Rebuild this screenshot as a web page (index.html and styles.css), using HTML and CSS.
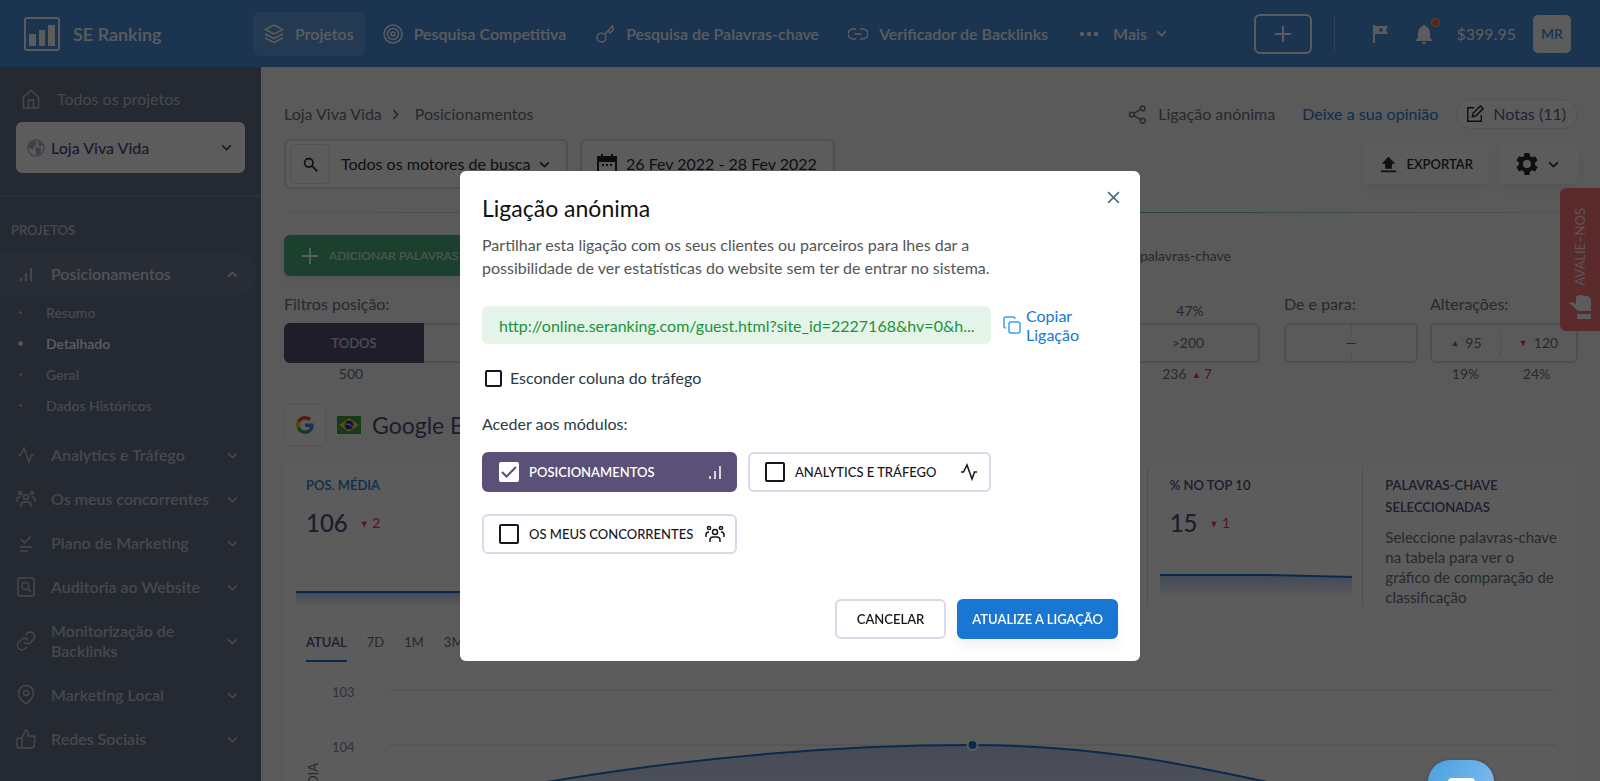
FILE: index.html
```html
<!DOCTYPE html>
<html lang="pt">
<head>
  <meta charset="UTF-8">
  <meta name="viewport" content="width=device-width, initial-scale=1.0">
  <title>SE Ranking - Posicionamentos</title>
  <link rel="stylesheet" href="styles.css">
</head>
<body>

<!-- shared icons -->
<svg class="sprite" aria-hidden="true">
  <symbol id="chevron" viewBox="0 0 12 12"><path d="M2 4l4 4 4-4"/></symbol>
  <symbol id="bars" viewBox="0 0 20 20"><path d="M5 14v3M10 9v8M15 4v13"/></symbol>
  <symbol id="pulse" viewBox="0 0 20 20"><path d="M2 10h2.5L8 3l5 14 2.5-7H18"/></symbol>
  <symbol id="people" viewBox="0 0 20 20">
    <circle cx="10" cy="8" r="2.5"/><circle cx="4" cy="4" r="1.6"/><circle cx="16" cy="4" r="1.6"/>
    <path d="M5 18v-2a3 3 0 0 1 3-3h4a3 3 0 0 1 3 3v2M1 13v-2a3 3 0 0 1 3-3M19 13v-2a3 3 0 0 0-3-3"/>
  </symbol>
</svg>

<header class="topbar">
  <a class="logo" href="#">
    <svg width="36" height="34" viewBox="0 0 36 34"><rect x="1" y="1" width="34" height="32" rx="2" fill="none" stroke="currentColor" stroke-width="2"/><path d="M5 17h7v12H5zM15 13h6v16h-6zM24 8h7v21h-7z" fill="currentColor"/></svg>
    <span>SE Ranking</span>
  </a>
  <nav class="topnav">
    <a class="topnav-link active" href="#">
      <svg class="icon" viewBox="0 0 20 20"><path d="M10 1l9 4.500-9 4.500-9-4.500zM1 10l9 4.500 9-4.500M1 14l9 4.500 9-4.500"/></svg>
      Projetos
    </a>
    <a class="topnav-link" href="#">
      <svg class="icon" viewBox="0 0 20 20"><circle cx="10" cy="10" r="9"/><circle cx="10" cy="10" r="5.500"/><circle cx="10" cy="10" r="2"/></svg>
      Pesquisa Competitiva
    </a>
    <a class="topnav-link" href="#">
      <svg class="icon" viewBox="0 0 20 20"><circle cx="6.500" cy="13.500" r="4.500"/><path d="M10 10l7.500-8 1 3.500-3.500 3.500-2-2"/></svg>
      Pesquisa de Palavras-chave
    </a>
    <a class="topnav-link" href="#">
      <svg class="icon" viewBox="0 0 20 20"><path d="M8 5H5a5 5 0 0 0 0 10h3M12 5h3a5 5 0 0 1 0 10h-3M6.500 10h7"/></svg>
      Verificador de Backlinks
    </a>
    <a class="topnav-link more" href="#">
      <svg class="icon fill" viewBox="0 0 20 20"><circle cx="3" cy="10" r="2.200"/><circle cx="10" cy="10" r="2.200"/><circle cx="17" cy="10" r="2.200"/></svg>
      Mais
      <svg class="icon small" viewBox="0 0 12 12"><use href="#chevron"/></svg>
    </a>
  </nav>
  <div class="account">
    <button class="add-btn" aria-label="+"><svg class="icon" viewBox="0 0 20 20"><path d="M10 2v16M2 10h16"/></svg></button>
    <span class="account-line"></span>
    <svg class="icon flag-icon" viewBox="0 0 20 20"><path d="M3 1h2v1h13l-2 4 2 4H5v9H3z" fill="currentColor"/><circle cx="11" cy="6" r="1.800" class="hole"/></svg>
    <div class="bell">
      <svg class="icon fill" viewBox="0 0 20 20"><path d="M10 1c1 0 1.500.7 1.500 1.500C14.500 3.200 16 5.800 16 9v5l2 2v1H2v-1l2-2V9c0-3.200 1.500-5.800 4.500-6.500C8.500 1.700 9 1 10 1zM8 18h4a2 2 0 0 1-4 0z"/></svg>
      <span class="bell-dot"></span>
    </div>
    <span class="balance">$399.95</span>
    <button class="avatar">MR</button>
  </div>
</header>

<div class="layout">
  <aside class="sidebar">
    <a class="all-projects" href="#">
      <svg class="icon" viewBox="0 0 20 20"><path d="M2.500 8L10 1.500 17.500 8v11h-15zM7.500 19v-8h5v8"/></svg>
      Todos os projetos
    </a>
    <div class="project">
      <svg class="icon globe" viewBox="0 0 20 20"><circle cx="10" cy="10" r="9"/><path class="land" d="M4 4l5-1 1 3-3 2-1 3-3-2zM10 10l5 1-1 5-3 1zM13 3l4 4-3 1z"/></svg>
      <select aria-label="Projeto"><option>Loja Viva Vida</option></select>
      <svg class="icon small" viewBox="0 0 12 12"><use href="#chevron"/></svg>
    </div>
    <h2 class="side-title">PROJETOS</h2>
    <nav class="menu">
      <a class="menu-item open" href="#"><svg class="icon" viewBox="0 0 20 20"><use href="#bars"/></svg><span>Posicionamentos</span><svg class="icon small up" viewBox="0 0 12 12"><use href="#chevron"/></svg></a>
      <ul class="submenu">
        <li><a href="#">Resumo</a></li>
        <li class="current"><a href="#">Detalhado</a></li>
        <li><a href="#">Geral</a></li>
        <li><a href="#">Dados Históricos</a></li>
      </ul>
      <a class="menu-item" href="#"><svg class="icon" viewBox="0 0 20 20"><use href="#pulse"/></svg><span>Analytics e Tráfego</span><svg class="icon small" viewBox="0 0 12 12"><use href="#chevron"/></svg></a>
      <a class="menu-item" href="#"><svg class="icon" viewBox="0 0 20 20"><use href="#people"/></svg><span>Os meus concorrentes</span><svg class="icon small" viewBox="0 0 12 12"><use href="#chevron"/></svg></a>
      <a class="menu-item" href="#"><svg class="icon" viewBox="0 0 20 20"><path d="M5 6l3.500 4L15 3M4 14h12M4 18h8"/></svg><span>Plano de Marketing</span><svg class="icon small" viewBox="0 0 12 12"><use href="#chevron"/></svg></a>
      <a class="menu-item" href="#"><svg class="icon" viewBox="0 0 20 20"><rect x="2" y="1" width="16" height="18" rx="2"/><circle cx="9.500" cy="9" r="3.500"/><path d="M12 12l3 3"/></svg><span>Auditoria ao Website</span><svg class="icon small" viewBox="0 0 12 12"><use href="#chevron"/></svg></a>
      <a class="menu-item" href="#"><svg class="icon" viewBox="0 0 20 20"><path d="M8 11a4.500 4.500 0 0 0 6.500.5l3-3A4.500 4.500 0 0 0 11 2.300L9.500 4M12 9a4.500 4.500 0 0 0-6.500-.5l-3 3A4.500 4.500 0 0 0 9 17.700l1.500-1.700"/></svg><span>Monitorização de Backlinks</span><svg class="icon small" viewBox="0 0 12 12"><use href="#chevron"/></svg></a>
      <a class="menu-item" href="#"><svg class="icon" viewBox="0 0 20 20"><path d="M10 19s-7.500-5.500-7.500-11a7.500 7.500 0 0 1 15 0c0 5.500-7.500 11-7.500 11z"/><circle cx="10" cy="8" r="2.500"/></svg><span>Marketing Local</span><svg class="icon small" viewBox="0 0 12 12"><use href="#chevron"/></svg></a>
      <a class="menu-item" href="#"><svg class="icon" viewBox="0 0 20 20"><path d="M6 9v10H2.500A1.500 1.500 0 0 1 1 17.500v-7A1.500 1.500 0 0 1 2.500 9zM6 9l3.500-8A2.500 2.500 0 0 1 12 3.500V7h5a2 2 0 0 1 2 2.300l-1.200 8A2 2 0 0 1 15.800 19H6"/></svg><span>Redes Sociais</span><svg class="icon small" viewBox="0 0 12 12"><use href="#chevron"/></svg></a>
    </nav>
  </aside>

  <main class="content">
    <div class="crumbs">
      <a href="#">Loja Viva Vida</a>
      <svg class="icon small next" viewBox="0 0 12 12"><use href="#chevron"/></svg>
      <span>Posicionamentos</span>
      <div class="crumb-actions">
        <a class="share" href="#">
          <svg class="icon" viewBox="0 0 20 20"><circle cx="15.500" cy="3.500" r="2.500"/><circle cx="4" cy="10" r="2.500"/><circle cx="15.500" cy="16.500" r="2.500"/><path d="M6.200 8.700l7-4M6.200 11.300l7 4"/></svg>
          Ligação anónima
        </a>
        <a class="opinion" href="#">Deixe a sua opinião</a>
        <button class="notes">
          <svg class="icon" viewBox="0 0 20 20"><path d="M9 3H2v15h15v-7M7 13l1-4 8-8 3 3-8 8z"/></svg>
          Notas (11)
        </button>
      </div>
    </div>

    <div class="toolbar">
      <div class="field engines">
        <button class="search-btn" aria-label="Pesquisar"><svg class="icon" viewBox="0 0 20 20"><circle cx="8" cy="8" r="5"/><path d="M12 12l6 6"/></svg></button>
        <select aria-label="Motores de busca"><option>Todos os motores de busca</option></select>
        <svg class="icon small" viewBox="0 0 12 12"><use href="#chevron"/></svg>
      </div>
      <button class="field dates">
        <svg class="icon calendar" viewBox="0 0 20 22"><path d="M1 4h18v16H1z"/><path d="M1 4h18v4H1zM5 1v3M15 1v3M5 12h2M9 12h2M13 12h2"/></svg>
        26 Fev 2022 - 28 Fev 2022
      </button>
      <button class="flat export">
        <svg class="icon fill" viewBox="0 0 20 20"><path d="M10 1l8 8h-4v6H6V9H2zM1 17h18v2H1z"/></svg>
        EXPORTAR
      </button>
      <button class="flat settings" aria-label="Definições">
        <svg class="icon gear" viewBox="0 0 24 24"><path d="M9.500 1h5l.6 3.200 1.900 1.100 3.100-1.100 2.500 4.300-2.500 2.100v2.400l2.500 2.100-2.500 4.300-3.100-1.100-1.900 1.100-.6 3.600h-5l-.6-3.600-1.900-1.100-3.100 1.100-2.500-4.300 2.500-2.100v-2.400L1.400 8.500l2.500-4.300L7 5.300l1.900-1.100zM12 8a4 4 0 1 0 0 8 4 4 0 0 0 0-8z"/></svg>
        <svg class="icon small" viewBox="0 0 12 12"><use href="#chevron"/></svg>
      </button>
    </div>

    <div class="rule"></div>

    <div class="actions">
      <button class="add-keywords"><svg class="icon" viewBox="0 0 20 20"><path d="M10 2v16M2 10h16"/></svg>ADICIONAR PALAVRAS</button>
      <span class="keywords">palavras-chave</span>
    </div>

    <div class="filters">
      <div class="filter positions">
        <div class="filter-head"><span>Filtros posição:</span><small>47%</small></div>
        <div class="filter-box"><button class="seg on">TODOS</button><button class="seg">&gt;200</button></div>
        <div class="filter-foot"><span>500</span><span>236 <b class="bad"><i>▲</i> 7</b></span></div>
      </div>
      <div class="filter range">
        <div class="filter-head"><span>De e para:</span></div>
        <div class="filter-box range-box">—</div>
      </div>
      <div class="filter changes">
        <div class="filter-head"><span>Alterações:</span></div>
        <div class="filter-box halves"><button><i class="good">▲</i>95</button><button><i class="bad">▼</i>120</button></div>
        <div class="filter-foot"><span>19%</span><span>24%</span></div>
      </div>
    </div>

    <div class="engine">
      <span class="engine-logo">
        <svg width="18" height="18" viewBox="0 0 48 48"><path fill="#ea4335" d="M24 9.500c3.500 0 6.700 1.200 9.200 3.600l6.900-6.900C35.900 2.400 30.500 0 24 0 14.600 0 6.500 5.400 2.600 13.200l8 6.200C12.400 13.700 17.700 9.500 24 9.500z"/><path fill="#4285f4" d="M47 24.500c0-1.600-.2-3.100-.4-4.500H24v9h12.900c-.6 3-2.200 5.500-4.700 7.200l7.700 6C44.400 38 47 31.800 47 24.500z"/><path fill="#fbbc05" d="M10.500 28.600a14.500 14.500 0 0 1 0-9.200l-8-6.200a24 24 0 0 0 0 21.600z"/><path fill="#34a853" d="M24 48c6.500 0 11.900-2.100 15.900-5.800l-7.700-6c-2.200 1.500-4.900 2.300-8.200 2.300-6.300 0-11.600-4.200-13.500-9.900l-8 6.200C6.500 42.600 14.600 48 24 48z"/></svg>
      </span>
      <svg width="24" height="18" viewBox="0 0 24 18"><rect width="24" height="18" rx="1" fill="#3da348"/><path d="M12 2l10 7-10 7L2 9z" fill="#ffd23b"/><circle cx="12" cy="9" r="4.500" fill="#22409a"/><path d="M8 8q4-1 8 3" stroke="#fff" fill="none"/></svg>
      <h1>Google B</h1>
    </div>

    <section class="stats">
      <article class="stat">
        <h3 class="blue">POS. MÉDIA</h3>
        <p><strong>106</strong><span class="bad"><i>▼</i> 2</span></p>
        <svg class="spark" viewBox="0 0 192 40" preserveAspectRatio="none"><path fill="url(#spark-area)" d="M0 19h192v14H0z"/><path d="M0 19h192"/></svg>
      </article>
      <article class="stat top10">
        <h3>% NO TOP 10</h3>
        <p><strong>15</strong><span class="bad"><i>▼</i> 1</span></p>
        <svg class="spark" viewBox="0 0 192 40" preserveAspectRatio="none">
          <defs><linearGradient id="spark-area" x1="0" y1="0" x2="0" y2="1"><stop offset="0" stop-color="#b9c8f2"/><stop offset="1" stop-color="#fff"/></linearGradient></defs>
          <path fill="url(#spark-area)" d="M0 2h110l82 2v21H0z"/><path d="M0 2h110l82 2"/>
        </svg>
      </article>
      <article class="stat selected">
        <h3>PALAVRAS-CHAVE SELECCIONADAS</h3>
        <p class="hint">Seleccione palavras-chave na tabela para ver o gráfico de comparação de classificação</p>
      </article>
    </section>

    <section class="chart">
      <div class="tabs">
        <button class="tab on">ATUAL</button>
        <button class="tab">7D</button>
        <button class="tab">1M</button>
        <button class="tab">3M</button>
      </div>
      <div class="plot">
        <span class="axis-title">MÉDIA</span>
        <div class="axis"><span>103</span><span>104</span></div>
        <svg viewBox="0 0 1166 150">
          <defs><linearGradient id="area" x1="0" y1="0" x2="0" y2="1"><stop offset="0" stop-color="#c4cff0"/><stop offset="1" stop-color="#e4ecf8"/></linearGradient></defs>
          <path class="grid" d="M0 12h1166M0 67h1166"/>
          <path fill="url(#area)" d="M0 135C200 90 400 67 583 67C700 67 790 85 873 103L1090 150H0z"/>
          <path class="curve" d="M0 135C200 90 400 67 583 67C700 67 790 85 873 103L1090 150"/>
          <circle class="point" cx="583" cy="67" r="5"/>
        </svg>
      </div>
    </section>
  </main>
</div>

<button class="rate">
  <svg class="icon fill" viewBox="0 0 24 26"><path d="M12 1l7 1c3 1 4 2 4 4v11H11c-1 0-2-1-3-2L1 9c2-2 5 0 7 1V4c0-2 2-3 4-3zM9 20h14v5H9z"/></svg>
  <span>AVALIE–NOS</span>
</button>

<div class="overlay">
  <form class="modal" role="dialog" aria-labelledby="modal-title">
    <button type="button" class="close" aria-label="Fechar"><svg class="icon" viewBox="0 0 12 12"><path d="M1 1l10 10M11 1L1 11"/></svg></button>
    <h2 id="modal-title">Ligação anónima</h2>
    <p class="modal-text">Partilhar esta ligação com os seus clientes ou parceiros para lhes dar a possibilidade de ver estatísticas do website sem ter de entrar no sistema.</p>
    <div class="link-row">
      <input class="link-url" type="text" readonly aria-label="Ligação" value="http://online.seranking.com/guest.html?site_id=2227168&amp;hv=0&amp;h...">
      <button type="button" class="copy">
        <svg class="icon" viewBox="0 0 18 18"><rect x="6" y="6" width="11" height="11" rx="2"/><path d="M3 12a2 2 0 0 1-2-2V3a2 2 0 0 1 2-2h7a2 2 0 0 1 2 2"/></svg>
        <span>Copiar Ligação</span>
      </button>
    </div>
    <label class="hide-traffic"><input type="checkbox" class="check">Esconder coluna do tráfego</label>
    <p class="modules-title">Aceder aos módulos:</p>
    <div class="modules">
      <label class="module checked"><input type="checkbox" class="check" checked><span>POSICIONAMENTOS</span><svg class="icon" viewBox="0 0 20 20"><use href="#bars"/></svg></label>
      <label class="module"><input type="checkbox" class="check"><span>ANALYTICS E TRÁFEGO</span><svg class="icon" viewBox="0 0 20 20"><use href="#pulse"/></svg></label>
      <label class="module"><input type="checkbox" class="check"><span>OS MEUS CONCORRENTES</span><svg class="icon" viewBox="0 0 20 20"><use href="#people"/></svg></label>
    </div>
    <div class="modal-actions">
      <button type="button" class="btn">CANCELAR</button>
      <button type="submit" class="btn primary">ATUALIZE A LIGAÇÃO</button>
    </div>
  </form>
</div>

<button class="chat" aria-label="Chat"><span></span></button>

</body>
</html>
```

FILE: styles.css
```css
* {
  box-sizing: border-box;
}
body {
  margin: 0;
  height: 100vh;
  overflow: hidden;
  display: flex;
  flex-direction: column;
  background: #f8f8fb;
  color: #6a757e;
  font-family: Lato, "Noto Sans", sans-serif;
  font-size: 16px;
  line-height: 20px;
}
a {
  color: inherit;
  text-decoration: none;
}
h1, h2, h3, p, ul {
  margin: 0;
  padding: 0;
}
button, input, select {
  font: inherit;
  color: inherit;
  margin: 0;
  padding: 0;
  border: none;
  background: none;
}
button {
  cursor: pointer;
}
select {
  appearance: none;
  flex: 1;
  min-width: 0;
}
.sprite {
  position: absolute;
  width: 0;
  height: 0;
}
.icon {
  width: 20px;
  height: 20px;
  flex: none;
  fill: none;
  stroke: currentColor;
  stroke-width: 1.5;
}
.icon.fill {
  fill: currentColor;
  stroke: none;
}
.icon.small {
  width: 13px;
  height: 13px;
}
.icon.up {
  transform: rotate(180deg);
}
.icon.next {
  transform: rotate(-90deg);
}
.good {
  color: #22a35a;
}
.bad {
  color: #ee3b3b;
}
.bad i {
  font-size: 9px;
  font-style: normal;
  vertical-align: 1px;
}

/* top bar */
.topbar {
  flex: none;
  height: 67px;
  padding: 0 29px 0 24px;
  display: flex;
  align-items: center;
  background: #4b90de;
  color: #fff;
}
.logo {
  display: flex;
  align-items: center;
  gap: 13px;
  width: 229px;
  font-size: 18px;
  font-weight: 600;
}
.topnav {
  display: flex;
  gap: 7px;
}
.topnav-link {
  display: flex;
  align-items: center;
  gap: 11px;
  height: 44px;
  padding: 0 11px;
  border-radius: 6px;
  font-weight: 600;
  white-space: nowrap;
}
.topnav-link.active {
  background: rgba(255, 255, 255, 0.14);
}
.topnav-link.more {
  padding-left: 13px;
  gap: 14px;
}
.more .small {
  margin-left: -6px;
}
.account {
  margin-left: auto;
  display: flex;
  align-items: center;
}
.add-btn {
  width: 58px;
  height: 40px;
  border: 2px solid #fff;
  border-radius: 6px;
  display: flex;
  align-items: center;
  justify-content: center;
}
.add-btn .icon, .add-keywords .icon {
  stroke-width: 2;
}
.account-line {
  width: 1px;
  height: 38px;
  margin: 0 35px 0 22px;
  background: #87b4e6;
}
.hole {
  fill: #4b90de;
  stroke: none;
}
.flag-icon {
  stroke: none;
}
.bell {
  position: relative;
  height: 20px;
  margin: 0 23px 0 24px;
}
.bell-dot {
  position: absolute;
  top: -6px;
  right: -6px;
  width: 9px;
  height: 9px;
  border: 1px solid #ffb8a8;
  border-radius: 50%;
  background: #ff5c3c;
}
.avatar {
  width: 38px;
  height: 38px;
  margin-left: 17px;
  border-radius: 5px;
  background: #fff;
  color: #4b90de;
  font-size: 14px;
  font-weight: 600;
}

/* sidebar */
.layout {
  flex: 1;
  min-height: 0;
  display: flex;
}
.sidebar {
  flex: none;
  width: 261px;
  background: #67728b;
  color: #bfc9cf;
}
.all-projects {
  display: flex;
  align-items: center;
  gap: 16px;
  height: 55px;
  padding: 9px 21px 0;
}
.project {
  display: flex;
  align-items: center;
  gap: 6px;
  height: 51px;
  margin: 0 16px 22px;
  padding: 0 12px 0 11px;
  border-radius: 6px;
  background: #fff;
  color: #4a4a80;
  font-weight: 500;
}
.globe {
  width: 18px;
  height: 18px;
  color: #b0b0d8;
}
.land {
  fill: currentColor;
}
.side-title {
  padding: 24px 11px 13px;
  border-top: 2px solid #77829b;
  font-size: 13px;
  line-height: 18px;
  font-weight: 600;
}
.menu-item {
  display: flex;
  align-items: center;
  gap: 15px;
  padding: 12px 22px 12px 16px;
  font-weight: 600;
}
.menu-item span {
  flex: 1;
}
.menu-item.open {
  margin-right: 5px;
  padding-right: 17px;
  border-radius: 0 22px 22px 0;
  background: #6f7a94;
  color: #dde2e8;
}
.submenu {
  list-style: none;
  padding: 1px 0 12px;
  font-size: 14px;
  font-weight: 600;
}
.submenu li {
  display: flex;
  align-items: center;
  gap: 25px;
  height: 31px;
  padding-left: 18px;
}
.submenu li::before {
  content: "";
  width: 3px;
  height: 3px;
  border: 1px solid #67728b;
  border-radius: 50%;
  background: currentColor;
  background-clip: padding-box;
  box-sizing: content-box;
  margin-right: -2px;
}
.submenu .current {
  color: #fff;
}
.submenu .current::before {
  border-color: currentColor;
}

/* main column */
.content {
  flex: 1;
  min-width: 0;
  padding: 32px 22px 0 23px;
}
.crumbs {
  display: flex;
  align-items: center;
  gap: 7px;
  height: 30px;
}
.crumbs > span {
  margin-left: 6px;
}
.crumb-actions {
  margin-left: auto;
  display: flex;
  align-items: center;
}
.share {
  display: flex;
  align-items: center;
  gap: 11px;
  margin-right: 27px;
}
.share .icon {
  width: 19px;
  height: 19px;
}
.opinion {
  margin-right: 18px;
  color: #2b7fd6;
}
.notes {
  display: flex;
  align-items: center;
  gap: 9px;
  height: 30px;
  padding: 0 11px 0 9px;
  border: 1px solid #e4e4ee;
  border-radius: 15px;
  background: #fff;
  color: #606088;
}
.notes svg {
  width: 18px;
  height: 18px;
  color: #222;
}
.toolbar {
  display: flex;
  align-items: center;
  margin-top: 10px;
  color: #2c2c34;
}
.field {
  display: flex;
  align-items: center;
  height: 50px;
  border: 2px solid #d9d9e8;
  border-radius: 6px;
  background: #fff;
}
.engines {
  width: 284px;
  margin-right: 12px;
  padding: 0 15px 0 4px;
}
.search-btn {
  width: 40px;
  height: 40px;
  margin-right: 11px;
  border: 1px solid #e0e0ec;
  border-radius: 6px;
  display: flex;
  align-items: center;
  justify-content: center;
}
.search-btn .icon {
  width: 17px;
  height: 17px;
  stroke-width: 2;
}
.dates {
  gap: 9px;
  padding: 0 16px 0 15px;
}
.calendar {
  height: 22px;
  stroke-width: 2;
}
.calendar path:last-child {
  fill: #222;
}
.flat {
  display: flex;
  align-items: center;
  height: 40px;
  border-radius: 6px;
  background: #fff;
  box-shadow: 0 5px 10px rgba(60, 60, 90, 0.06);
  font-size: 13px;
  font-weight: 600;
}
.export {
  gap: 10px;
  margin-left: auto;
  margin-right: 11px;
  padding: 0 16px;
}
.export .icon {
  width: 17px;
  height: 17px;
}
.settings {
  gap: 8px;
  padding: 0 18px 0 15px;
}
.gear {
  width: 24px;
  height: 24px;
  fill: #2c2c34;
  fill-rule: evenodd;
  stroke: none;
}
.rule {
  height: 1px;
  margin: 23px 0 22px;
  background: linear-gradient(90deg, #e8eef0, #4fb881 60%, #e8eef0);
}
.actions {
  display: flex;
  align-items: center;
}
.add-keywords {
  display: flex;
  align-items: center;
  gap: 9px;
  width: 240px;
  height: 41px;
  padding: 0 16px;
  border-radius: 6px;
  background: #4bb27c;
  color: #d5e6dc;
  font-size: 12px;
  font-weight: 600;
  white-space: nowrap;
  box-shadow: 0 5px 10px rgba(60, 60, 90, 0.06);
}
.add-keywords .icon {
  color: #fff;
}
.keywords {
  margin-left: auto;
  margin-right: 347px;
  font-size: 14px;
}
.filters {
  display: flex;
  gap: 12px;
  height: 110px;
  margin-top: 18px;
}
.filter-head {
  display: flex;
  justify-content: space-between;
  height: 29px;
}
.filter-head small {
  width: 140px;
  padding-top: 7px;
  font-size: 14px;
  text-align: center;
}
.filter-box {
  display: flex;
  justify-content: space-between;
  height: 40px;
  border: 2px solid #d9d9e8;
  border-radius: 6px;
  font-size: 14px;
}
.positions {
  flex: 1;
  margin-right: 12px;
}
.seg {
  width: 140px;
}
.seg.on {
  margin: -2px 0 -2px -2px;
  border-radius: 6px 0 0 6px;
  background: #5a5078;
  color: #d5d5dd;
  font-weight: 600;
  font-size: 13px;
}
.range {
  width: 134px;
}
.range-box {
  align-items: center;
  justify-content: center;
  background: linear-gradient(#d9d9e8 0 10px, transparent 10px 27px, #d9d9e8 27px) center / 1px 100% no-repeat;
}
.changes {
  width: 148px;
}
.halves button {
  width: 68px;
  margin: 5px 0;
}
.halves button + button {
  flex: 1;
  border-left: 1px solid #d9d9e8;
}
.halves i {
  margin-right: 6px;
  font-size: 9px;
  font-style: normal;
  vertical-align: 2px;
}
.filter-foot {
  display: flex;
  justify-content: space-between;
  padding: 1px 6px 0 0;
  font-size: 14px;
}
.filter-foot span {
  width: 134px;
  text-align: center;
}
.filter-foot b {
  margin-left: 2px;
  font-size: 13px;
  font-weight: 500;
}
.changes .filter-foot span {
  width: 50%;
}
.engine {
  display: flex;
  align-items: center;
  gap: 11px;
}
.engine-logo {
  display: flex;
  align-items: center;
  justify-content: center;
  width: 42px;
  height: 42px;
  border: 1px solid #e4e4ee;
  border-radius: 6px;
  background: #fff;
}
.engine h1 {
  color: #50507a;
  font-size: 23px;
  font-weight: 400;
}

/* summary cards */
.stats {
  display: grid;
  grid-template-columns: repeat(6, minmax(0, 1fr));
  height: 148px;
  margin-top: 17px;
  padding: 5px 0 6px;
  border-radius: 6px 6px 0 0;
  background: #fefefe;
}
.stat {
  padding: 6px 18px 0 22px;
}
.stat h3 {
  color: #50507a;
  font-size: 13px;
  line-height: 22px;
  font-weight: 600;
}
.stat h3.blue {
  color: #2b7fd6;
}
.stat p {
  display: flex;
  align-items: center;
  gap: 12px;
  margin-top: 13px;
}
.stat strong {
  color: #50507a;
  font-size: 24px;
  line-height: 28px;
  font-weight: 500;
}
.stat p .bad {
  font-size: 14px;
}
.spark {
  display: block;
  width: 192px;
  height: 40px;
  margin: 36px 0 -11px -10px;
  fill: none;
  stroke-width: 2;
}
.spark path:last-child {
  stroke: #1976d2;
}
.top10, .selected {
  border-left: 1px solid #dcdce4;
}
.top10 {
  grid-column: 5;
}
.stat p.hint {
  display: block;
  margin-top: 9px;
  font-size: 15px;
  line-height: 20px;
}

/* chart */
.chart {
  padding: 20px 22px 0;
  background: #fff;
}
.tabs {
  display: flex;
  gap: 20px;
  font-size: 13px;
}
.tab {
  height: 31px;
  padding-bottom: 8px;
  border-bottom: 2px solid transparent;
}
.tab.on {
  border-color: #1976d2;
  color: #50507a;
  font-weight: 600;
}
.plot {
  display: flex;
  margin-top: 16px;
}
.plot svg {
  flex: 1;
}
.axis-title {
  align-self: flex-end;
  width: 26px;
  margin-bottom: 23px;
  font-size: 13px;
  line-height: 14px;
  writing-mode: vertical-rl;
  transform: rotate(180deg);
  text-align: right;
}
.axis {
  display: flex;
  flex-direction: column;
  gap: 35px;
  width: 57px;
  padding-top: 4px;
  color: #858e96;
  font-size: 13px;
}
.grid {
  stroke: #dcdce0;
}
.curve {
  fill: none;
  stroke: #1976d2;
  stroke-width: 2;
}
.point {
  fill: #1976d2;
  stroke: #fff;
  stroke-width: 2;
}

/* floating buttons */
.rate {
  position: fixed;
  top: 188px;
  right: 0;
  width: 40px;
  height: 143px;
  padding: 0 8px 11px;
  display: flex;
  flex-direction: column-reverse;
  align-items: center;
  gap: 8px;
  border-radius: 6px 0 0 6px;
  background: #fb757d;
  color: #fff;
  font-size: 13px;
}
.rate .icon {
  height: 26px;
  width: 24px;
}
.rate span {
  writing-mode: vertical-rl;
  transform: rotate(180deg);
  color: #ffe8e8;
}
.chat {
  position: fixed;
  right: 106px;
  bottom: -45px;
  width: 66px;
  height: 66px;
  padding-top: 18px;
  border-radius: 22px;
  background: linear-gradient(120deg, #48a0e0, #8cc0ee);
  box-shadow: 0 1px 4px rgba(0, 0, 0, 0.3);
  display: flex;
  justify-content: center;
}
.chat span {
  width: 27px;
  height: 22px;
  border-radius: 4px;
  background: #fff;
}

/* modal */
.overlay {
  position: fixed;
  inset: 0;
  padding-top: 171px;
  display: flex;
  justify-content: center;
  align-items: flex-start;
  background: rgba(0, 0, 0, 0.64);
}
.modal {
  position: relative;
  width: 680px;
  padding: 22px;
  border-radius: 6px;
  background: #fff;
  color: #263c46;
}
.modal h2 {
  color: #111;
  font-size: 23px;
  line-height: 30px;
  font-weight: 400;
}
.close {
  position: absolute;
  top: 20px;
  right: 20px;
  display: flex;
  color: #4a6e82;
}
.close .icon {
  width: 13px;
  height: 13px;
}
.modal-text {
  width: 520px;
  margin-top: 10px;
  color: #555;
  line-height: 23px;
}
.link-row {
  display: flex;
  align-items: center;
  gap: 12px;
  margin-top: 27px;
}
.link-url {
  width: 509px;
  height: 38px;
  padding: 0 6px 0 17px;
  border-radius: 6px;
  background: #e4f4e9;
  color: #1b9338;
  text-overflow: ellipsis;
}
.copy {
  display: flex;
  align-items: center;
  gap: 5px;
  width: 84px;
  color: #1976d2;
  line-height: 19px;
  text-align: left;
}
.copy .icon {
  width: 18px;
  height: 18px;
  color: #3f9cf0;
}
.check {
  appearance: none;
  flex: none;
  width: 20px;
  height: 20px;
  margin: 0;
  border: 2px solid #16161e;
  border-radius: 2px;
  background: #fff;
}
.check:checked {
  border-color: #fff;
  background: #fff url("data:image/svg+xml,%3Csvg xmlns='http://www.w3.org/2000/svg' viewBox='0 0 16 16'%3E%3Cpath d='M1 8l4.500 4.500L15 3' fill='none' stroke='%235a5078' stroke-width='2'/%3E%3C/svg%3E") center / 16px no-repeat;
}
.hide-traffic {
  display: flex;
  align-items: center;
  gap: 8px;
  margin: 24px 0 0 3px;
}
.hide-traffic .check {
  width: 17px;
  height: 17px;
}
.modules-title {
  margin-top: 26px;
}
.modules {
  display: grid;
  grid-template-columns: 255px 243px;
  gap: 22px 11px;
  margin-top: 18px;
}
.module {
  display: flex;
  align-items: center;
  gap: 10px;
  height: 40px;
  padding: 0 10px 0 15px;
  border: 2px solid #d9d9e8;
  border-radius: 6px;
  color: #16161e;
  font-size: 13px;
  font-weight: 500;
}
.module span {
  flex: 1;
  white-space: nowrap;
}
.module.checked {
  border-color: #5a5078;
  background: #5a5078;
  color: #fff;
  font-weight: 600;
}
.modal-actions {
  display: flex;
  justify-content: flex-end;
  gap: 11px;
  margin-top: 45px;
}
.btn {
  height: 40px;
  padding: 0 20px;
  border: 2px solid #d9d9e8;
  border-radius: 6px;
  color: #16161e;
  font-size: 13px;
  font-weight: 600;
}
.btn.primary {
  padding: 0 13px;
  border-color: #1976d2;
  background: #1976d2;
  color: #fff;
  box-shadow: 0 8px 12px rgba(0, 0, 0, 0.05);
}
```
